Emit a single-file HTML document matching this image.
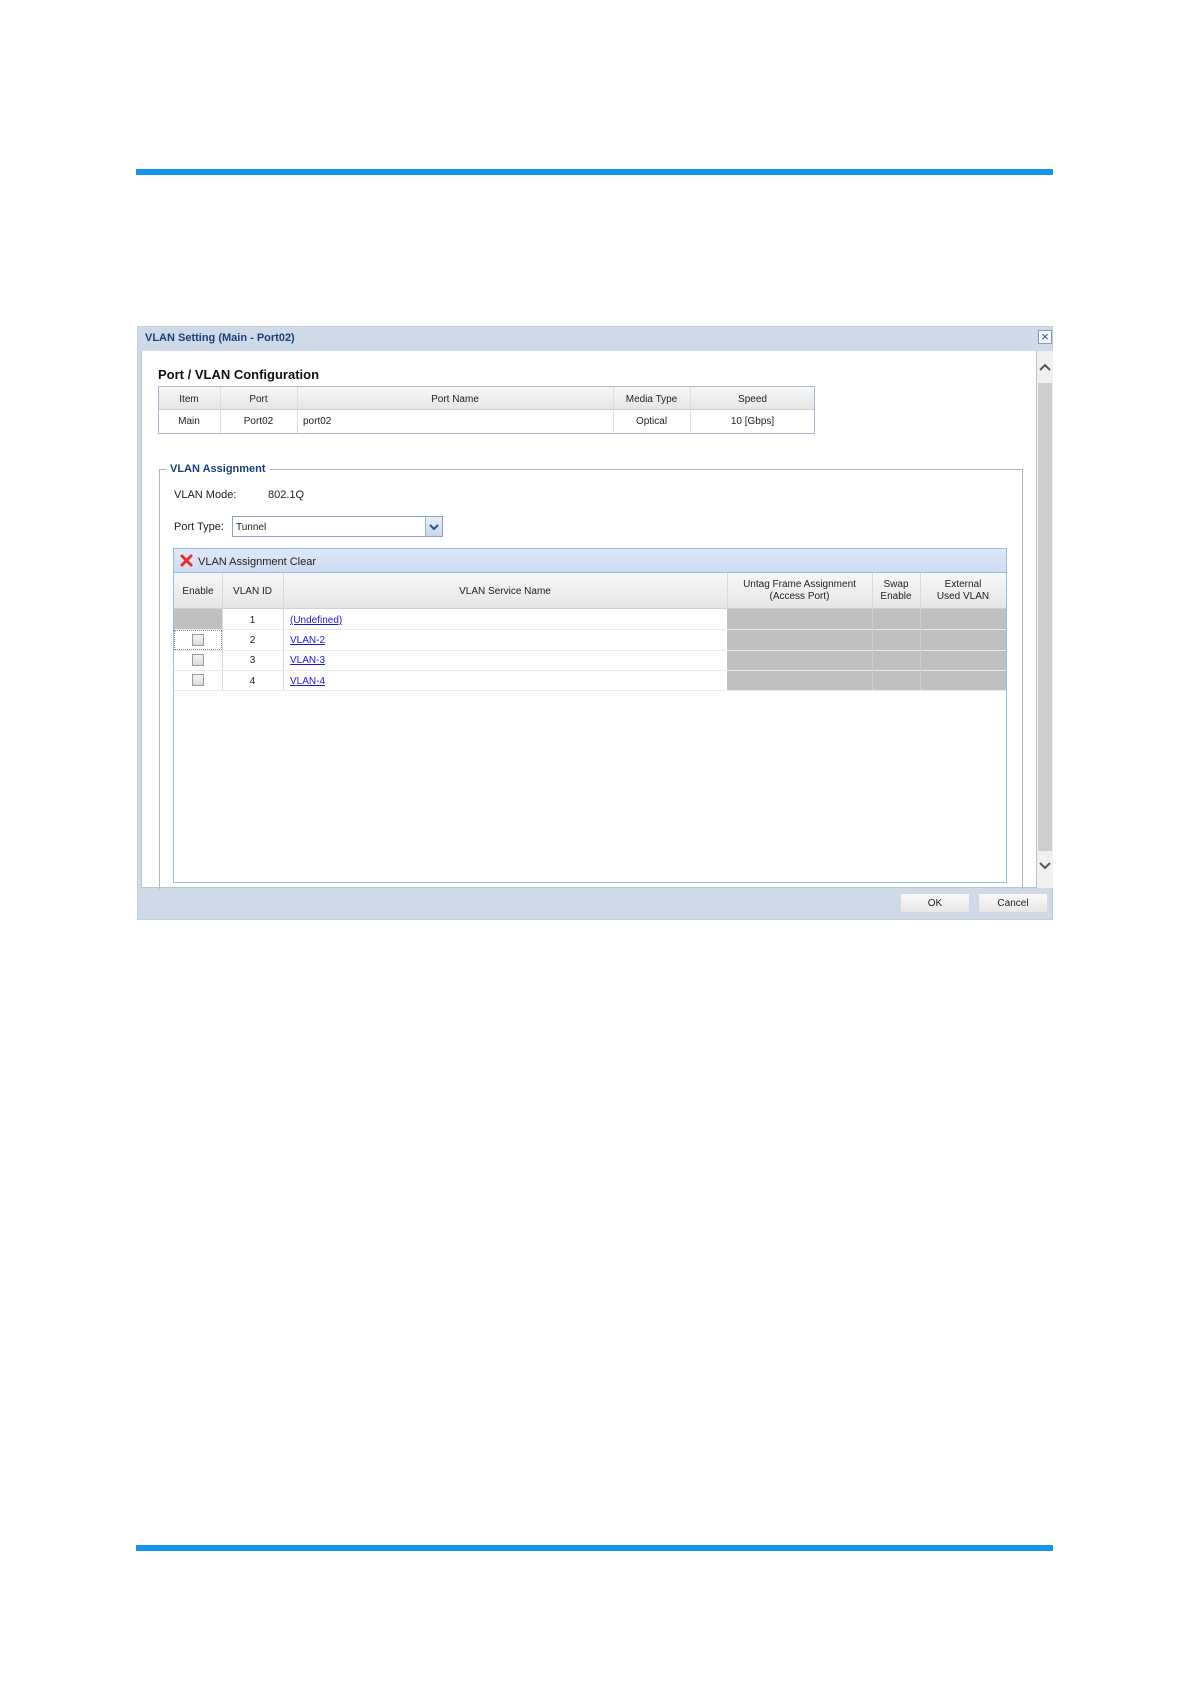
<!DOCTYPE html>
<html><head><meta charset="utf-8">
<style>
*{margin:0;padding:0;box-sizing:border-box}
body{width:1190px;height:1684px;background:#fff;position:relative;font-family:"Liberation Sans",Tahoma,sans-serif;font-size:11px;color:#222;overflow:hidden}
.a{position:absolute}
.bl{background:#1594ec;height:6px;left:136px;width:917px}
.c{text-align:center}
.hd{background:linear-gradient(#f7f7f7,#e6e6e6)}
a{color:#1a1ae0;text-decoration:underline}
.cb{width:12px;height:12px;border:1px solid #999;background:linear-gradient(#f4f4f4,#dcdcdc)}
.g{background:#c0c0c0}
</style></head><body>
<div class="a bl" style="top:169px"></div>
<div class="a bl" style="top:1545px"></div>

<div class="a" style="left:137px;top:326px;width:916px;height:594px;background:#cfdae8;border:1px solid #c3cfde"></div>
<div class="a" style="left:145px;top:332px;font-weight:bold;color:#1a3f7a;font-size:11px">VLAN Setting (Main - Port02)</div>
<div class="a" style="left:1038px;top:330px;width:14px;height:14px;border:1px solid #7f9bc4;background:#f4f7fb;color:#2b4e8c;font-size:13px;line-height:12px;text-align:center">×</div>
<div class="a" style="left:141px;top:351px;width:896px;height:537px;background:#fff;border:1px solid #b6c4d6;border-top:none"></div>
<div class="a" style="left:1037px;top:351px;width:16px;height:537px;background:#f0f0f0"></div>
<div class="a" style="left:1038px;top:383px;width:14px;height:468px;background:#cdcdcd"></div>
<svg class="a" style="left:1039px;top:363px" width="12" height="10"><path d="M1 7 L6 2 L11 7" stroke="#555" stroke-width="2" fill="none"/></svg>
<svg class="a" style="left:1039px;top:860px" width="12" height="10"><path d="M1 3 L6 8 L11 3" stroke="#555" stroke-width="2" fill="none"/></svg>

<div class="a" style="left:158px;top:367px;font-weight:bold;font-size:13px;color:#111">Port / VLAN Configuration</div>
<div class="a" style="left:158px;top:386px;width:657px;height:48px;border:1px solid #a9b9cf"></div>
<div class="a hd" style="left:159px;top:387px;width:655px;height:23px;border-bottom:1px solid #d0d0d0"></div>
<div class="a" style="left:220px;top:387px;width:1px;height:46px;background:#ddd"></div>
<div class="a" style="left:297px;top:387px;width:1px;height:46px;background:#ddd"></div>
<div class="a" style="left:613px;top:387px;width:1px;height:46px;background:#ddd"></div>
<div class="a" style="left:690px;top:387px;width:1px;height:46px;background:#ddd"></div>
<div class="a c" style="left:158px;top:394px;width:62px;font-size:10px">Item</div>
<div class="a c" style="left:220px;top:394px;width:77px;font-size:10px">Port</div>
<div class="a c" style="left:297px;top:394px;width:316px;font-size:10px">Port Name</div>
<div class="a c" style="left:613px;top:394px;width:77px;font-size:10px">Media Type</div>
<div class="a c" style="left:690px;top:394px;width:125px;font-size:10px">Speed</div>
<div class="a c" style="left:158px;top:416px;width:62px;font-size:10px">Main</div>
<div class="a c" style="left:220px;top:416px;width:77px;font-size:10px">Port02</div>
<div class="a" style="left:303px;top:416px;font-size:10px">port02</div>
<div class="a c" style="left:613px;top:416px;width:77px;font-size:10px">Optical</div>
<div class="a c" style="left:690px;top:416px;width:125px;font-size:10px">10 [Gbps]</div>

<div class="a" style="left:159px;top:469px;width:864px;height:420px;border:1px solid #b5b5b5;border-bottom:none"></div>
<div class="a" style="left:166px;top:463px;background:#fff;padding:0 4px;font-weight:bold;color:#1a3f7a;font-size:11px">VLAN Assignment</div>
<div class="a" style="left:174px;top:489px;font-size:11px">VLAN Mode:</div>
<div class="a" style="left:268px;top:489px;font-size:11px">802.1Q</div>
<div class="a" style="left:174px;top:521px;font-size:11px">Port Type:</div>
<div class="a" style="left:232px;top:516px;width:211px;height:21px;border:1px solid #8aa3c8;background:#fff;padding:5px 3px 0;font-size:10px">Tunnel</div>
<div class="a" style="left:425px;top:517px;width:17px;height:19px;background:linear-gradient(#e8eef7,#c9d6ea);border-left:1px solid #9fb3d1"></div>
<svg class="a" style="left:429px;top:523px" width="10" height="8"><path d="M1 2 L5 6 L9 2" stroke="#2b4e8c" stroke-width="2" fill="none"/></svg>

<div class="a" style="left:173px;top:548px;width:834px;height:335px;border:1px solid #99bbe8;background:#fff"></div>
<div class="a" style="left:174px;top:549px;width:832px;height:24px;background:linear-gradient(#dfe8f6,#cddcf1);border-bottom:1px solid #99bbe8"></div>
<svg class="a" style="left:180px;top:554px" width="13" height="13"><path d="M2 2 L11 11 M11 2 L2 11" stroke="#e03030" stroke-width="3" stroke-linecap="round"/></svg>
<div class="a" style="left:198px;top:556px;font-size:11px">VLAN Assignment Clear</div>
<div class="a hd" style="left:174px;top:573px;width:832px;height:36px;border-bottom:1px solid #d0d0d0"></div>
<div class="a" style="left:222px;top:573px;width:1px;height:117px;background:#d8d8d8"></div>
<div class="a" style="left:283px;top:573px;width:1px;height:117px;background:#d8d8d8"></div>
<div class="a" style="left:727px;top:573px;width:1px;height:36px;background:#d8d8d8"></div>
<div class="a" style="left:872px;top:573px;width:1px;height:36px;background:#d8d8d8"></div>
<div class="a" style="left:920px;top:573px;width:1px;height:36px;background:#d8d8d8"></div>
<div class="a c" style="left:174px;top:586px;width:48px;font-size:10px">Enable</div>
<div class="a c" style="left:222px;top:586px;width:61px;font-size:10px">VLAN ID</div>
<div class="a c" style="left:283px;top:586px;width:444px;font-size:10px">VLAN Service Name</div>
<div class="a c" style="left:727px;top:579px;width:145px;font-size:10px;line-height:12px">Untag Frame Assignment<br>(Access Port)</div>
<div class="a c" style="left:872px;top:579px;width:48px;font-size:10px;line-height:12px">Swap<br>Enable</div>
<div class="a c" style="left:920px;top:579px;width:86px;font-size:10px;line-height:12px">External<br>Used VLAN</div>
<div class="a g" style="left:174px;top:609px;width:48px;height:20px"></div>
<div class="a g" style="left:727px;top:609px;width:279px;height:81px"></div>
<div class="a" style="left:174px;top:629px;width:832px;height:1px;background:#ececec"></div>
<div class="a" style="left:174px;top:650px;width:832px;height:1px;background:#ececec"></div>
<div class="a" style="left:174px;top:670px;width:832px;height:1px;background:#ececec"></div>
<div class="a" style="left:174px;top:690px;width:832px;height:1px;background:#ececec"></div>
<div class="a" style="left:872px;top:609px;width:1px;height:81px;background:#d0d0d0"></div>
<div class="a" style="left:920px;top:609px;width:1px;height:81px;background:#d0d0d0"></div>
<div class="a" style="left:174px;top:630px;width:48px;height:20px;border:1px dotted #888"></div>
<div class="a cb" style="left:192px;top:634px"></div>
<div class="a cb" style="left:192px;top:654px"></div>
<div class="a cb" style="left:192px;top:674px"></div>
<div class="a c" style="left:222px;top:615px;width:61px;font-size:10px">1</div>
<div class="a c" style="left:222px;top:635px;width:61px;font-size:10px">2</div>
<div class="a c" style="left:222px;top:655px;width:61px;font-size:10px">3</div>
<div class="a c" style="left:222px;top:676px;width:61px;font-size:10px">4</div>
<div class="a" style="left:290px;top:615px;font-size:10px"><a>(Undefined)</a></div>
<div class="a" style="left:290px;top:635px;font-size:10px"><a>VLAN-2</a></div>
<div class="a" style="left:290px;top:655px;font-size:10px"><a>VLAN-3</a></div>
<div class="a" style="left:290px;top:676px;font-size:10px"><a>VLAN-4</a></div>

<div class="a c" style="left:900px;top:893px;width:70px;height:20px;background:linear-gradient(#fafafa,#e6e6e6);border:1px solid #d8d8d8;font-size:10px;line-height:19px">OK</div>
<div class="a c" style="left:978px;top:893px;width:70px;height:20px;background:linear-gradient(#fafafa,#e6e6e6);border:1px solid #d8d8d8;font-size:10px;line-height:19px">Cancel</div>
</body></html>
